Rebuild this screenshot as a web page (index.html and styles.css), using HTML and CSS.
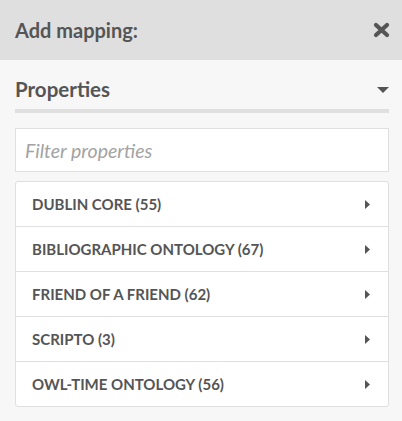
FILE: index.html
```html
<!DOCTYPE html>
<html>
<head>
<meta charset="utf-8">
<link rel="stylesheet" href="styles.css">
</head>
<body>
<div class="panel">
  <div class="header">
    <h2 class="title">Add mapping:</h2>
    <svg class="close" viewBox="0 0 17 16" width="17" height="16"><path d="M3 3 L14 13 M14 3 L3 13" stroke="#555" stroke-width="4.2" stroke-linecap="round"/></svg>
  </div>
  <div class="body">
    <div class="section-head">
      <h3 class="section-title">Properties</h3>
      <svg class="caret-down" viewBox="0 0 12 6" width="12" height="6"><path d="M0 0 L12 0 L6 6 Z" fill="#555"/></svg>
    </div>
    <input class="filter" type="text" placeholder="Filter properties">
    <ul class="list">
      <li class="item"><span>Dublin Core (55)</span><svg class="caret-right" viewBox="0 0 5 9" width="5" height="9"><path d="M0 0 L5 4.5 L0 9 Z" fill="#555"/></svg></li>
      <li class="item"><span>Bibliographic Ontology (67)</span><svg class="caret-right" viewBox="0 0 5 9" width="5" height="9"><path d="M0 0 L5 4.5 L0 9 Z" fill="#555"/></svg></li>
      <li class="item"><span>Friend of a Friend (62)</span><svg class="caret-right" viewBox="0 0 5 9" width="5" height="9"><path d="M0 0 L5 4.5 L0 9 Z" fill="#555"/></svg></li>
      <li class="item"><span>Scripto (3)</span><svg class="caret-right" viewBox="0 0 5 9" width="5" height="9"><path d="M0 0 L5 4.5 L0 9 Z" fill="#555"/></svg></li>
      <li class="item"><span>OWL-Time Ontology (56)</span><svg class="caret-right" viewBox="0 0 5 9" width="5" height="9"><path d="M0 0 L5 4.5 L0 9 Z" fill="#555"/></svg></li>
    </ul>
  </div>
</div>
</body>
</html>
```
FILE: styles.css
```css
html, body {
  margin: 0;
  padding: 0;
  background: #f7f7f7;
  font-family: Lato, "Open Sans", sans-serif;
  color: #555;
}
.panel {
  width: 402px;
  height: 421px;
  display: flex;
  flex-direction: column;
}
.header {
  height: 60px;
  background: #dfdfdf;
  display: flex;
  align-items: center;
  justify-content: space-between;
  padding: 0 12px 0 15px;
  box-sizing: border-box;
}
.title {
  margin: 0;
  font-size: 20px;
  font-weight: 700;
  color: #555;
}
.close {
  display: block;
}
.body {
  padding: 0 13px 0 15px;
  display: flex;
  flex-direction: column;
}
.section-head {
  height: 53px;
  border-bottom: 4px solid #dfdfdf;
  display: flex;
  align-items: center;
  justify-content: space-between;
  padding-top: 8px;
  box-sizing: border-box;
}
.section-title {
  margin: 0;
  font-size: 20.5px;
  font-weight: 700;
  color: #555;
}
.caret-down {
  display: block;
  margin-top: 2px;
}
.filter {
  margin-top: 15px;
  height: 44px;
  box-sizing: border-box;
  border: 1px solid #dfdfdf;
  background: #fff;
  padding: 0 9px;
  font-family: Lato, sans-serif;
  font-size: 19.5px;
  color: #555;
  outline: none;
}
.filter::placeholder {
  font-style: italic;
  color: #a3a3a3;
}
.list {
  list-style: none;
  margin: 9px 0 0;
  padding: 0;
  background: #fff;
  border: 1px solid #dfdfdf;
  border-radius: 3px;
}
.item {
  height: 44px;
  display: flex;
  align-items: center;
  justify-content: space-between;
  padding: 0 18px 0 16px;
  border-top: 1px solid #dfdfdf;
  font-size: 15px;
  font-weight: 700;
  text-transform: uppercase;
  color: #555;
}
.item:first-child {
  border-top: 0;
}
.caret-right {
  display: block;
}
```
